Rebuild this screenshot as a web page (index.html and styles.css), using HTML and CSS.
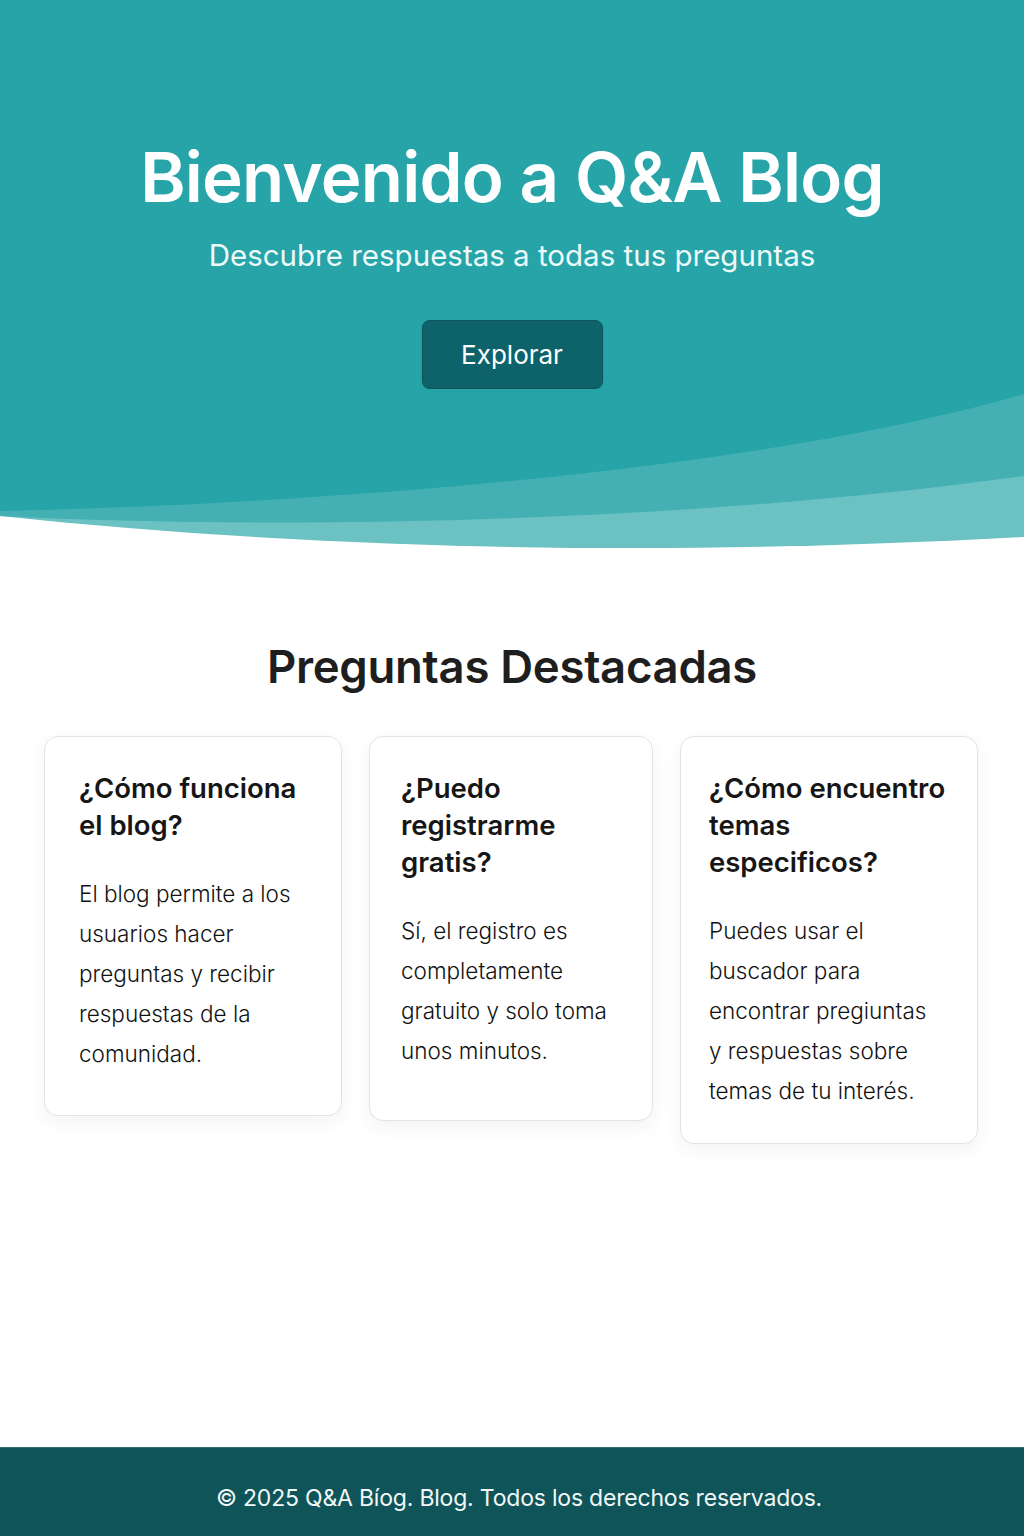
FILE: index.html
```html
<!DOCTYPE html>
<html lang="es">
<head>
<meta charset="utf-8">
<title>Q&amp;A Blog</title>
<link rel="stylesheet" href="styles.css">
</head>
<body>
<header class="hero">
  <div class="hero-inner">
    <h1 class="hero-title">Bienvenido a Q&amp;A Blog</h1>
    <p class="hero-sub">Descubre respuestas a todas tus preguntas</p>
    <a class="hero-btn" href="#">Explorar</a>
  </div>
  <svg class="hero-wave" viewBox="0 0 1024 165" preserveAspectRatio="none" aria-hidden="true">
    <path d="M0,0 H1024 V148 C700,166 350,164 0,127 Z" fill="#6cc2c3"/>
    <path d="M0,0 H1024 V87 C700,132 300,142 0,127 Z" fill="#45b0b3"/>
    <path d="M0,0 H1024 V5 C800,70 420,112 0,122 Z" fill="#26a4a8"/>
  </svg>
</header>

<main class="featured">
  <h2 class="featured-title">Preguntas Destacadas</h2>
  <div class="cards">
    <article class="card card-a">
      <h3 class="card-title">¿Cómo funciona el blog?</h3>
      <p class="card-text">El blog permite a los usuarios hacer preguntas y recibir respuestas de la comunidad.</p>
    </article>
    <article class="card card-b">
      <h3 class="card-title">¿Puedo registrarme gratis?</h3>
      <p class="card-text">Sí, el registro es completamente gratuito y solo toma unos minutos.</p>
    </article>
    <article class="card card-c">
      <h3 class="card-title">¿Cómo encuentro temas especificos?</h3>
      <p class="card-text card-text-narrow">Puedes usar el buscador para encontrar pregiuntas y respuestas sobre temas de tu interés.</p>
    </article>
  </div>
</main>

<footer class="footer">
  <p class="footer-text">© 2025 Q&amp;A Bíog. Blog. Todos los derechos reservados.</p>
</footer>
</body>
</html>
```
FILE: styles.css
```css
* { box-sizing: border-box; }

html, body { margin: 0; padding: 0; }

body {
  font-family: Inter, "Noto Sans", "Liberation Sans", sans-serif;
  background: #ffffff;
  color: #1c1c1c;
  min-height: 1536px;
  display: flex;
  flex-direction: column;
}

.hero {
  display: flex;
  flex-direction: column;
}

.hero-inner {
  background: #26a4a8;
  padding-top: 135px;
  display: flex;
  flex-direction: column;
  align-items: center;
  text-align: center;
  color: #ffffff;
}

.hero-title {
  margin: 0;
  font-size: 69px;
  line-height: 84px;
  font-weight: 600;
  letter-spacing: -0.8px;
}

.hero-sub {
  margin: 18px 0 0;
  font-size: 29.5px;
  line-height: 36px;
  font-weight: 400;
  color: #eef9f9;
}

.hero-btn {
  margin-top: 47px;
  display: block;
  width: 181px;
  height: 69px;
  line-height: 67px;
  text-align: center;
  background: #0e6269;
  border: 1px solid #0b555b;
  border-radius: 8px;
  color: #ffffff;
  font-size: 26px;
  text-decoration: none;
  box-shadow: 0 1px 2px rgba(0, 0, 0, 0.15);
}

.hero-wave {
  display: block;
  width: 100%;
  height: 165px;
}

.featured {
  padding-top: 86px;
  display: flex;
  flex-direction: column;
  align-items: center;
}

.featured-title {
  margin: 0;
  font-size: 45.5px;
  line-height: 54px;
  font-weight: 600;
  color: #1e1e1e;
  letter-spacing: -0.3px;
}

.cards {
  margin-top: 42px;
  display: grid;
  grid-template-columns: 298px 284px 298px;
  column-gap: 27px;
  align-items: start;
  transform: translateX(-1px);
}

.card {
  background: #ffffff;
  border: 1px solid #dfe4ec;
  border-radius: 14px;
  box-shadow: 0 6px 18px rgba(30, 50, 70, 0.06);
  padding-top: 33px;
}

.card-a { padding-left: 34px; padding-right: 28px; padding-bottom: 41px; }
.card-b { padding-left: 31px; padding-right: 26px; padding-bottom: 49px; }
.card-c { padding-left: 28px; padding-right: 24px; padding-bottom: 32px; }

.card-title {
  margin: 0;
  font-size: 27.5px;
  line-height: 37px;
  font-weight: 600;
  color: #161616;
}

.card-text {
  margin: 30px 0 0;
  font-size: 22.5px;
  line-height: 40px;
  font-weight: 300;
  color: #111111;
}

.card-text-narrow {
  max-width: 228px;
}

.footer {
  margin-top: auto;
  height: 89px;
  background: #0e5458;
  border-top: 1px solid #2f6e72;
  display: flex;
  align-items: center;
  justify-content: center;
}

.footer-text {
  margin: 12px 0 0 14px;
  color: #f2f7f7;
  font-size: 23px;
  font-weight: 400;
  letter-spacing: -0.2px;
}
```
